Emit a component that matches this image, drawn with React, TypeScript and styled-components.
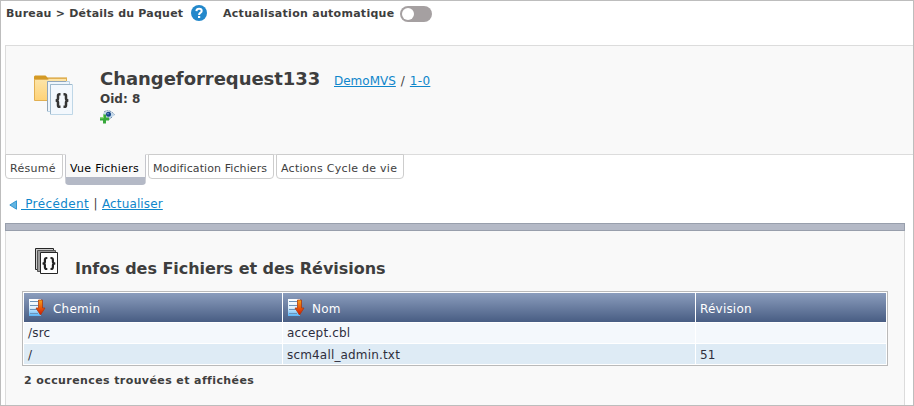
import React from "react";
import styled, { createGlobalStyle } from "styled-components";

const GlobalStyle = createGlobalStyle`
  *, *::before, *::after { box-sizing: border-box; }
  body {
    margin: 0;
    background: #fff;
    color: #3e3e3e;
    font-family: Verdana, "DejaVu Sans", sans-serif;
    font-size: 12px;
  }
  svg { display: block; flex: none; }
`;

const Page = styled.div`
  width: 914px;
  height: 406px;
  border: 1px solid #bdbdbd;
  padding-left: 4px;
  overflow: hidden;
  display: flex;
  flex-direction: column;
  white-space: pre;
`;

const TopBar = styled.header`
  display: flex;
  height: 44px;
  padding: 4px 0 0 1px;
  align-items: flex-start;
`;

const TopLabel = styled.span<{ $width: number; $spacing?: number }>`
  width: ${(p) => p.$width}px;
  font-size: 11px;
  font-weight: bold;
  line-height: 17px;
  letter-spacing: ${(p) => p.$spacing ?? 0}px;
`;

const HelpSlot = styled.span`
  width: 32px;
`;

const Toggle = styled.span`
  display: flex;
  width: 32px;
  height: 16px;
  margin-top: 1px;
  padding: 2px;
  border-radius: 8px;
  background: #a5a0a1;
`;

const Knob = styled.span`
  width: 12px;
  height: 12px;
  border-radius: 50%;
  background: #fff;
`;

const PackageHeader = styled.section`
  display: flex;
  height: 110px;
  flex: none;
  padding: 22px 0 0 28px;
  background: #f9f9f9;
  border: 1px solid #dcdcdc;
  border-right: 0;
`;

const FolderSlot = styled.div`
  padding-top: 0;
`;

const PackageDetails = styled.div`
  display: flex;
  flex-direction: column;
  margin-left: 26px;
`;

const TitleRow = styled.div`
  display: flex;
  height: 21px;
  align-items: baseline;
  line-height: 21px;
`;

const PackageTitle = styled.h1`
  margin: 0;
  width: 234px;
  font-size: 18px;
  letter-spacing: -0.04px;
`;

const Link = styled.a<{ $spacing?: number }>`
  color: #0f86cb;
  text-decoration: underline;
  text-underline-offset: 1px;
  letter-spacing: ${(p) => p.$spacing ?? 0}px;
`;

const Slash = styled.span`
  width: 14px;
  text-align: center;
`;

const Oid = styled.span`
  height: 21px;
  font-size: 12px;
  font-weight: bold;
  line-height: 20px;
`;

const Tabs = styled.nav`
  display: flex;
  height: 30px;
  flex: none;
  gap: 2px;
  margin-top: -1px;
  align-items: flex-start;
`;

const Tab = styled.span<{ $width: number; $active?: boolean; $spacing?: number }>`
  width: ${(p) => p.$width}px;
  height: ${(p) => (p.$active ? 31 : 25)}px;
  padding-left: 4px;
  border: 1px solid ${(p) => (p.$active ? "#c5c6cc" : "#cdcdcd")};
  border-top-color: ${(p) => (p.$active ? "#f9f9f9" : "#cdcdcd")};
  border-bottom: ${(p) => (p.$active ? "8px solid #b4b9c6" : "1px solid #cdcdcd")};
  border-radius: 0 0 4px 4px;
  background: ${(p) => (p.$active ? "#f9f9f9" : "#fff")};
  color: ${(p) => (p.$active ? "#000" : "#3e3e3e")};
  font-size: 11px;
  line-height: 28px;
  letter-spacing: ${(p) => p.$spacing ?? 0}px;
`;

const Actions = styled.div`
  display: flex;
  height: 39px;
  flex: none;
  padding: 12px 0 0 4px;
  line-height: 17px;
`;

const BackArrow = styled.svg`
  margin: 4px 3px 0 0;
`;

const Separator = styled.span`
  width: 13px;
  text-align: center;
`;

const Section = styled.section`
  width: 900px;
  flex: 1;
  background: #f9f9f9;
  border: solid #dcdcdc;
  border-width: 0 1px;
`;

const SectionBar = styled.div`
  height: 8px;
  margin: 0 -1px;
  background: #b4b9c6;
  border: 1px solid #989fac;
`;

const SectionHeading = styled.div`
  display: flex;
  height: 60px;
  padding: 17px 0 0 29px;
`;

const SectionTitle = styled.h2`
  margin: 10px 0 0 17px;
  font-size: 16px;
  line-height: 22px;
  letter-spacing: -0.04px;
`;

const Table = styled.div`
  width: 866px;
  height: 75px;
  margin-left: 16px;
  padding: 1px;
  border: 1px solid #bababa;
  background: #fff;
  display: grid;
  grid-template-columns: 258px 412px 190px;
  grid-template-rows: 29px 20px 20px;
  column-gap: 1px;
  row-gap: 1px;
`;

const HeadCell = styled.div`
  display: flex;
  padding: 6px 0 0 4px;
  gap: 7px;
  color: #fff;
  line-height: 20px;
  letter-spacing: 0.2px;
  background: linear-gradient(#8b9dbd, #485d83);
`;

const Cell = styled.div<{ $even?: boolean }>`
  padding-left: 4px;
  color: #2e2e3c;
  line-height: ${(p) => (p.$even ? 22 : 20)}px;
  letter-spacing: 0.17px;
  background: ${(p) => (p.$even ? "#deebf5" : "#f4f8fc")};
`;

const Footer = styled.div`
  padding: 6px 0 0 18px;
  font-size: 11px;
  font-weight: bold;
  line-height: 18px;
  letter-spacing: 0.4px;
`;

const HelpIcon = () => (
  <svg width="16" height="16" viewBox="0 0 16 16">
    <circle cx="8" cy="8" r="8" fill="#2388cb" />
    <path d="M5.400 6.100C5.500 4.700 6.500 3.800 8.100 3.800s2.600.9 2.600 2.100c0 1-.6 1.500-1.400 2C8.500 8.500 8.100 8.800 8.100 9.900" fill="none" stroke="#fff" strokeWidth="2" />
    <path d="M7 11h2.200v2H7z" fill="#fff" />
  </svg>
);

const FolderIcon = () => (
  <svg width="40" height="48" viewBox="0 0 40 48">
    <defs>
      <linearGradient id="folder" x1="0" y1="0" x2="0" y2="1">
        <stop stopColor="#fce5aa" />
        <stop offset="1" stopColor="#ffd276" />
      </linearGradient>
    </defs>
    <path d="M0 11V8.500L1 7.500h10.500l2 2H33V13H0z" fill="#d49a25" />
    <path d="M.5 11.500h13l1.500-1h17.500v22H.5z" fill="url(#folder)" stroke="#e2b052" />
    <path d="M13.500 13.500h22v30h-22z" fill="#edf5fc" stroke="#b9d1e2" />
    <path d="M13.500 43V13.500H32" fill="none" stroke="#91a5b8" />
    <path d="M16.500 16.500h22v30h-22z" fill="#f3f8fd" stroke="#bfd7e7" />
    <path d="M16.500 46V16.500H38" fill="none" stroke="#9eb8cb" />
    <g fill="none" stroke="#353535" strokeWidth="2.500">
      <path d="M26.500 26.200h-.9q-1.600 0-1.600 1.600v2.600q0 1.800-2.200 2.100 2.200.3 2.200 2.100v2.600q0 1.600 1.600 1.600h.9" />
      <path d="M29.500 26.200h.9q1.600 0 1.600 1.600v2.600q0 1.800 2.200 2.100-2.200.3-2.200 2.100v2.600q0 1.600-1.600 1.600h-.9" />
    </g>
  </svg>
);

const FollowIcon = () => (
  <svg width="16" height="14" viewBox="0 0 16 14">
    <path d="M3 3Q9-1 15 5L9 9 5 7z" fill="#c4d8e9" />
    <path d="M4 2Q9-1.500 14.500 4.500M12 7L9 9.500" fill="none" stroke="#6889ab" strokeDasharray="2 .7" />
    <circle cx="8.500" cy="4.200" r="2.500" fill="#17468a" />
    <circle cx="8" cy="3.700" r=".7" fill="#a5c7e6" />
    <path d="M3 4.500h3v3h3v3H6v3H3v-3H0v-3h3z" fill="#36a83a" />
    <path d="M3.500 5v3H0" fill="none" stroke="#80d668" />
  </svg>
);

const FilesIcon = () => (
  <svg width="23" height="26" viewBox="0 0 23 26">
    <path d="M.5.5h18v21H.5z" fill="#ccc" stroke="#262626" />
    <path d="M2.500 2.500h18v21h-18z" fill="#999" stroke="#555" />
    <path d="M5.500 4.500h17v21h-17z" fill="#fff" stroke="#262626" />
    <g fill="none" stroke="#242424" strokeWidth="2.200">
      <path d="M12.300 10h-.7Q9.900 10 9.900 12v1.800q0 1.700-2.400 1.700 2.400 0 2.400 1.700V19q0 2 1.700 2h.7" />
      <path d="M15.500 10h.7q1.700 0 1.700 2v1.800q0 1.700 2.400 1.700-2.400 0-2.400 1.700V19q0 2-1.700 2h-.7" />
    </g>
  </svg>
);

const SortIcon = () => (
  <svg width="18" height="18" viewBox="0 0 18 18">
    <defs>
      <linearGradient id="sheet" x1="0" y1="0" x2="0" y2="1">
        <stop stopColor="#fff" />
        <stop offset=".5" stopColor="#dff0fc" />
        <stop offset="1" stopColor="#5ab4f6" />
      </linearGradient>
      <linearGradient id="arrow" x1="0" y1="0" x2="0" y2="1">
        <stop stopColor="#f5a11b" />
        <stop offset=".5" stopColor="#ea5a09" />
        <stop offset="1" stopColor="#cf1608" />
      </linearGradient>
    </defs>
    <path d="M1 0h12v17H1z" fill="url(#sheet)" />
    <path d="M2 2.500h8M2 6.500h8M2 10.500h7M2 14.500h8" stroke="#6d93b8" />
    <path d="M10.500 1h4v8H17l-4.500 7L8 9h2.500z" fill="url(#arrow)" stroke="#a93a12" strokeWidth=".8" />
  </svg>
);

export default function App() {
  return (
    <>
      <GlobalStyle />
      <Page>
        <TopBar>
          <TopLabel $width={185} $spacing={0.22}>{"Bureau > Détails du Paquet"}</TopLabel>
          <HelpSlot><HelpIcon /></HelpSlot>
          <TopLabel $width={177} $spacing={0.28}>Actualisation automatique</TopLabel>
          <Toggle><Knob /></Toggle>
        </TopBar>
        <PackageHeader>
          <FolderSlot><FolderIcon /></FolderSlot>
          <PackageDetails>
            <TitleRow>
              <PackageTitle>Changeforrequest133</PackageTitle>
              <Link>DemoMVS</Link>
              <Slash>/</Slash>
              <Link $spacing={0.3}>1-0</Link>
            </TitleRow>
            <Oid>Oid: 8</Oid>
            <FollowIcon />
          </PackageDetails>
        </PackageHeader>
        <Tabs>
          <Tab $width={58} $spacing={0.3}>Résumé</Tab>
          <Tab $width={81} $active $spacing={0.28}>Vue Fichiers</Tab>
          <Tab $width={126} $spacing={0.09}>Modification Fichiers</Tab>
          <Tab $width={128} $spacing={0.27}>Actions Cycle de vie</Tab>
        </Tabs>
        <Actions>
          <BackArrow width="9" height="10" viewBox="0 0 9 10">
            <path d="M7.500.8v8.400L.8 5z" fill="#63b5e2" stroke="#3698d1" />
          </BackArrow>
          <Link $spacing={0.38}> Précédent</Link>
          <Separator>|</Separator>
          <Link $spacing={0.13}>Actualiser</Link>
        </Actions>
        <Section>
          <SectionBar />
          <SectionHeading>
            <FilesIcon />
            <SectionTitle>Infos des Fichiers et des Révisions</SectionTitle>
          </SectionHeading>
          <Table>
            <HeadCell><SortIcon />Chemin</HeadCell>
            <HeadCell><SortIcon />Nom</HeadCell>
            <HeadCell>Révision</HeadCell>
            <Cell>/src</Cell>
            <Cell>accept.cbl</Cell>
            <Cell />
            <Cell $even>/</Cell>
            <Cell $even>scm4all_admin.txt</Cell>
            <Cell $even>51</Cell>
          </Table>
          <Footer>2 occurences trouvées et affichées</Footer>
        </Section>
      </Page>
    </>
  );
}
